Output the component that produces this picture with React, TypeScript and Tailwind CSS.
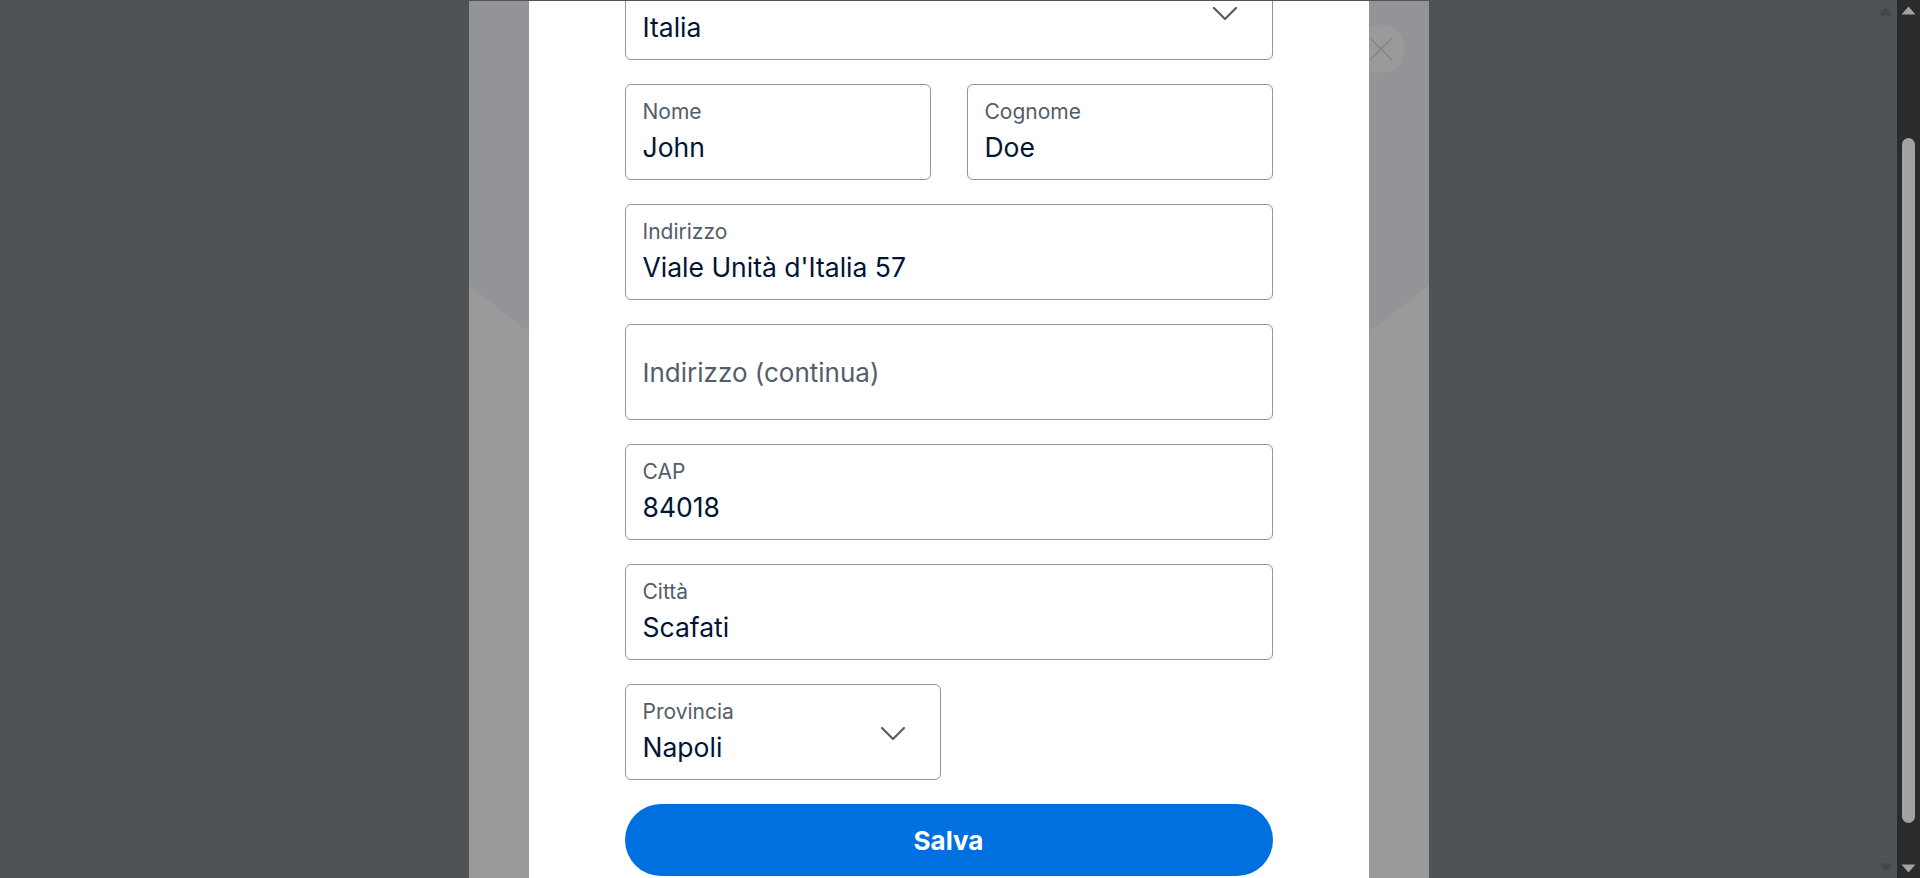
import React from 'react';

type Field = { label?: string; value?: string; placeholder?: string; select?: boolean };

function Chevron() {
  return (
    <svg width="24" height="13" viewBox="0 0 24 13" fill="none" className="mt-[2px] shrink-0">
      <polyline points="1,1 12,12 23,1" stroke="#545d68" strokeWidth="2.2" strokeLinecap="round" strokeLinejoin="round" />
    </svg>
  );
}

function InputBox({ label, value, placeholder, select }: Field) {
  if (placeholder) {
    return (
      <div className="h-[96px] rounded-[6px] border border-[#929496] pl-[17px] pt-[32px]">
        <div className="text-[26px] leading-[32px] text-[#545d68]">{placeholder}</div>
      </div>
    );
  }
  return (
    <div className="flex h-[96px] items-center rounded-[6px] border border-[#929496] pl-[17px] pr-[35px]">
      <div className="flex h-full flex-1 flex-col pt-[13px]">
        <div className="text-[21px] leading-[28px] text-[#545d68]">{label}</div>
        <div className="mt-[5px] text-[26.5px] leading-[32px] text-[#001435]">{value}</div>
      </div>
      {select && <Chevron />}
    </div>
  );
}

function Triangle({ up, color }: { up?: boolean; color: string }) {
  return (
    <svg width="15" height="9" viewBox="0 0 15 9">
      <polygon points={up ? '7.5,0.5 14.5,8.5 0.5,8.5' : '0.5,0.5 14.5,0.5 7.5,8.5'} fill={color} />
    </svg>
  );
}

export default function App() {
  return (
    <div className="flex h-[878px] w-full overflow-hidden bg-[#4f5356] font-['Inter',sans-serif]">
      <div className="relative flex flex-1 justify-center">
        <div className="relative w-[960px] overflow-hidden border-t border-[#4f5356] bg-[#9a9a9a]">
          {/* background blob of the dimmed page */}
          <div className="absolute left-[-251px] top-[-999px] h-[1462px] w-[1462px] rounded-full bg-[#939498]" />
          {/* close button of the dimmed page */}
          <div className="absolute left-[888px] top-[24px] flex h-[48px] w-[48px] items-center justify-center rounded-full bg-[#9a9a9a]">
            <svg width="24" height="24" viewBox="0 0 24 24">
              <path d="M1 1 23 23 M23 1 1 23" stroke="#878787" strokeWidth="1.6" />
            </svg>
          </div>

          <div className="relative mx-auto -mt-px flex h-[880px] w-[840px] flex-col bg-white px-[96px]">
            <div className="-mt-[36px] flex flex-col gap-[24px]">
              <InputBox label="Paese" value="Italia" select />
              <div className="grid grid-cols-2 gap-[36px]">
                <InputBox label="Nome" value="John" />
                <InputBox label="Cognome" value="Doe" />
              </div>
              <InputBox label="Indirizzo" value="Viale Unità d'Italia 57" />
              <InputBox placeholder="Indirizzo (continua)" />
              <InputBox label="CAP" value="84018" />
              <InputBox label="Città" value="Scafati" />
              <div className="w-[316px]">
                <InputBox label="Provincia" value="Napoli" select />
              </div>
              <button className="h-[72px] w-full shrink-0 rounded-full bg-[#0070e0] text-[26px] font-bold text-white">
                Salva
              </button>
            </div>
          </div>
        </div>

        {/* ghost arrows of the page scrollbar under the overlay */}
        <div className="absolute right-[4px] top-[7px]">
          <Triangle up color="#43474a" />
        </div>
        <div className="absolute bottom-[6px] right-[4px]">
          <Triangle color="#43474a" />
        </div>
      </div>

      <div className="flex w-[23px] flex-col items-center bg-[#2b2b2b] pt-[6px]">
        <Triangle up color="#a3a3a3" />
        <div className="mt-[123px] h-[685px] w-[13px] rounded-full bg-[#a3a3a3]" />
        <div className="mt-auto pb-[5px]">
          <Triangle color="#a3a3a3" />
        </div>
      </div>
    </div>
  );
}
